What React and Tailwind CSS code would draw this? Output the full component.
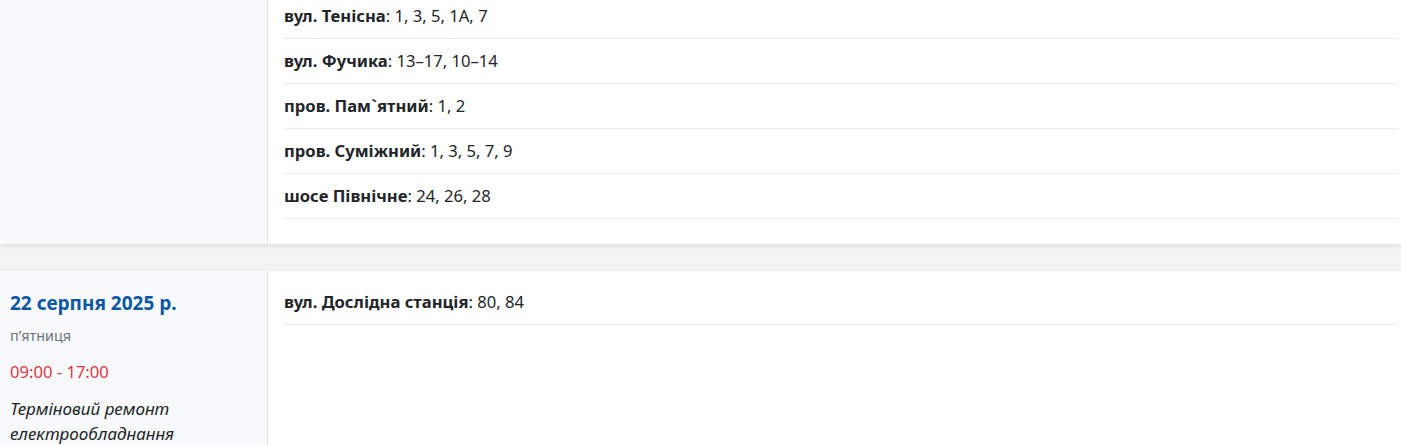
import React from "react";

const font = { fontFamily: '"Noto Sans", "Open Sans", sans-serif' };

const outages = [
    {
        id: 1,
        date: null,
        streets: [
            { name: "вул. Тенісна", houses: "1, 3, 5, 1А, 7" },
            { name: "вул. Фучика", houses: "13–17, 10–14" },
            { name: "пров. Пам`ятний", houses: "1, 2" },
            { name: "пров. Суміжний", houses: "1, 3, 5, 7, 9" },
            { name: "шосе Північне", houses: "24, 26, 28" },
        ],
    },
    {
        id: 2,
        date: "22 серпня 2025 р.",
        day: "п’ятниця",
        time: "09:00 - 17:00",
        reason: "Терміновий ремонт електрообладнання",
        streets: [{ name: "вул. Дослідна станція", houses: "80, 84" }],
    },
];

const OutageCard = ({ item, className }) => (
    <div className={`flex bg-white shadow-[0_2px_4px_rgba(0,0,0,0.08)] ${className}`}>
        <div className="w-[268px] shrink-0 bg-[#f8f9fa] border-r border-[#dee2e6] pl-[10px] pr-3 pt-[18px]">
            {item.date && (
                <>
                    <div className="text-[19px] leading-[28px] font-bold text-[#0b57a4]">{item.date}</div>
                    <div className="mt-[5px] text-[14.4px] leading-[28px] text-[#6c757d]">{item.day}</div>
                    <div className="mt-[8px] text-[16.6px] leading-[28px] text-[#dc3545]">{item.time}</div>
                    <div className="mt-[10px] text-[17px] leading-[25px] italic text-[#212529]">{item.reason}</div>
                </>
            )}
        </div>
        <div className="flex-1 pl-4 pr-[3px] pt-[9px] pb-[25px]">
            {item.streets.map((s, i) => (
                <div key={i} className="h-[45px] border-b border-[#e9ecef] pt-[10px] text-[16.6px] leading-[24px] text-[#212529]">
                    <span className="font-bold">{s.name}</span>: {s.houses}
                </div>
            ))}
        </div>
    </div>
);

export default function App() {
    return (
        <div className="min-h-screen bg-[#f3f3f3] overflow-hidden" style={font}>
            <OutageCard item={outages[0]} className="-mt-[15px]" />
            <OutageCard item={outages[1]} className="mt-[27px] min-h-[200px]" />
        </div>
    );
}
